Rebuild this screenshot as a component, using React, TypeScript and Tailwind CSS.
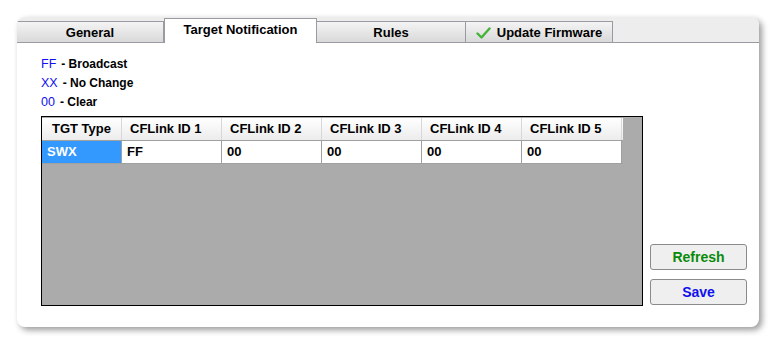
import React from "react";

const tabs = [
	{ label: "General", width: "w-[147px]" },
	{ label: "Target Notification", width: "w-[153px]", active: true },
	{ label: "Rules", width: "w-[149px]" },
	{ label: "Update Firmware", width: "w-[147px]", check: true },
];

const columns = ["CFLink ID 1", "CFLink ID 2", "CFLink ID 3", "CFLink ID 4", "CFLink ID 5"];
const values = ["FF", "00", "00", "00", "00"];

function CheckIcon() {
	return (
		<svg width="15" height="12" viewBox="0 0 15 12">
			<path d="M1.5 6.5 L5.5 10.5 L13.5 1.5" fill="none" stroke="#44b33a" strokeWidth="2.4" strokeLinecap="round" strokeLinejoin="round" />
		</svg>
	);
}

export default function App() {
	return (
		<div className="w-[776px] h-[344px] bg-white pt-[17px] pl-[17px] font-['Liberation_Sans',Arial,sans-serif]">
			<div className="w-[742px] h-[310px] bg-white rounded-[8px] overflow-hidden shadow-[3px_3px_6px_rgba(0,0,0,0.4)] flex flex-col">
				{/* tab strip */}
				<div className="h-[26px] bg-[#ededed] border-b border-[#9a9aa2] flex items-end shrink-0">
					{tabs.map((t) =>
						t.active ? (
							<div
								key={t.label}
								className={`${t.width} h-[25px] -mb-px bg-white border-x border-t border-[#9a9aa2] flex items-center justify-center text-[13px] font-bold text-black pb-[2px]`}
							>
								{t.label}
							</div>
						) : (
							<div
								key={t.label}
								className={`${t.width} h-[21px] pt-px bg-gradient-to-b from-[#f4f4f4] to-[#d9d9d9] border-r border-t border-[#9a9aa2] flex items-center justify-center gap-[6px] text-[13px] font-bold text-black`}
							>
								{t.check && <CheckIcon />}
								{t.label}
							</div>
						),
					)}
				</div>

				{/* content */}
				<div className="flex-1 pl-[24px] pt-[12px] flex flex-col">
					<div className="text-[12px] font-bold leading-[19px]">
						<div>
							<span className="text-[#1010f0] font-normal text-[12.5px]">FF</span>
							<span className="ml-[5px]">- Broadcast</span>
						</div>
						<div>
							<span className="text-[#1010f0] font-normal text-[12.5px]">XX</span>
							<span className="ml-[5px]">- No Change</span>
						</div>
						<div>
							<span className="text-[#1010f0] font-normal text-[12.5px]">00</span>
							<span className="ml-[5px]">- Clear</span>
						</div>
					</div>

					<div className="mt-[4px] flex items-end gap-[7px]">
						<div className="w-[602px] h-[190px] shrink-0 border border-black bg-[#ababab] pt-px">
							<div className="flex h-[23px] w-[581px] bg-gradient-to-b from-white to-[#ececec] border-b border-[#a0a0a0] text-[13px] font-bold">
								<div className="w-[80px] pl-[10px] flex items-center border-r border-[#d8d8d8]">TGT Type</div>
								{columns.map((c) => (
									<div key={c} className="w-[100px] pl-[8px] flex items-center border-r border-[#d8d8d8]">
										{c}
									</div>
								))}
							</div>
							<div className="flex h-[23px] w-[581px] border-b border-[#a0a0a0] text-[13px] font-bold">
								<div className="w-[80px] pl-[5px] flex items-center bg-[#3399ff] text-white border-r border-[#a0a0a0]">SWX</div>
								{values.map((v, i) => (
									<div key={i} className="w-[100px] pl-[5px] flex items-center bg-white border-r border-[#a0a0a0]">
										{v}
									</div>
								))}
							</div>
						</div>

						<div className="flex flex-col gap-[9px] shrink-0 mb-px">
							<button className="w-[97px] h-[26px] rounded-[3px] border border-[#8a8a8a] bg-[#efefef] text-[14px] font-bold text-[#0a8a0a]">
								Refresh
							</button>
							<button className="w-[97px] h-[26px] rounded-[3px] border border-[#8a8a8a] bg-[#efefef] text-[14px] font-bold text-[#1010f0]">
								Save
							</button>
						</div>
					</div>
				</div>
			</div>
		</div>
	);
}
